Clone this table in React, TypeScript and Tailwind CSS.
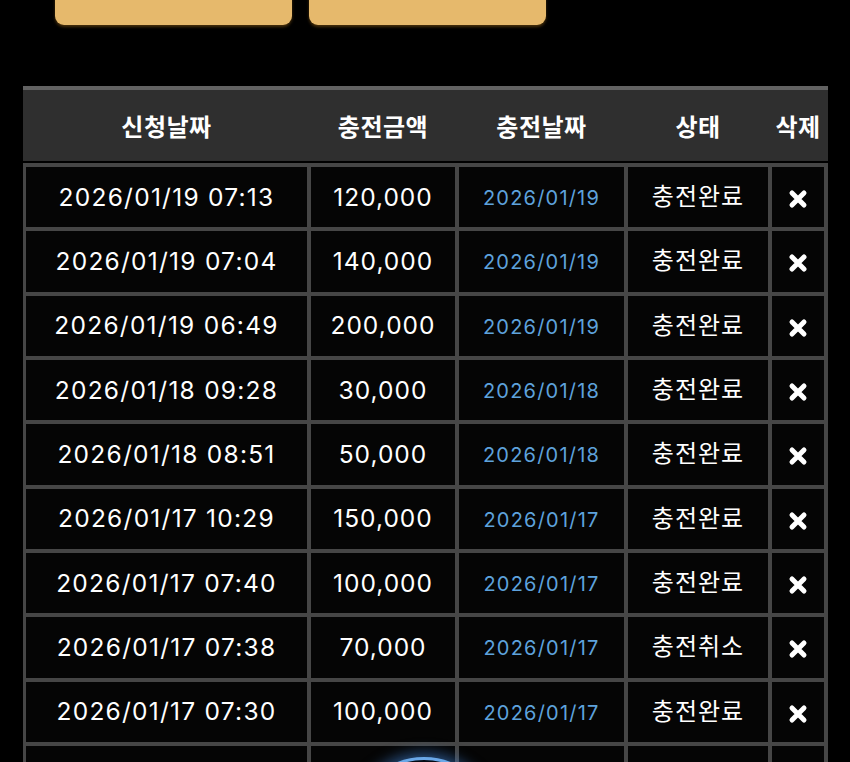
import React from 'react';

interface ChargeRow {
  requested: string;
  amount: string;
  chargedOn: string;
  status: string;
}

const rows: ChargeRow[] = [
  { requested: '2026/01/19 07:13', amount: '120,000', chargedOn: '2026/01/19', status: '충전완료' },
  { requested: '2026/01/19 07:04', amount: '140,000', chargedOn: '2026/01/19', status: '충전완료' },
  { requested: '2026/01/19 06:49', amount: '200,000', chargedOn: '2026/01/19', status: '충전완료' },
  { requested: '2026/01/18 09:28', amount: '30,000', chargedOn: '2026/01/18', status: '충전완료' },
  { requested: '2026/01/18 08:51', amount: '50,000', chargedOn: '2026/01/18', status: '충전완료' },
  { requested: '2026/01/17 10:29', amount: '150,000', chargedOn: '2026/01/17', status: '충전완료' },
  { requested: '2026/01/17 07:40', amount: '100,000', chargedOn: '2026/01/17', status: '충전완료' },
  { requested: '2026/01/17 07:38', amount: '70,000', chargedOn: '2026/01/17', status: '충전취소' },
  { requested: '2026/01/17 07:30', amount: '100,000', chargedOn: '2026/01/17', status: '충전완료' },
];

const cols = 'grid grid-cols-[281px_144px_165px_140px_52px] gap-x-[4px]';
const font = { fontFamily: '"Inter", "Noto Sans CJK KR", sans-serif' };

const DeleteIcon = () => (
  <svg width="20" height="20" viewBox="0 0 20 20" className="mt-[4px]">
    <path d="M4 4 L16 16 M16 4 L4 16" stroke="white" strokeWidth="5" strokeLinecap="round" />
  </svg>
);

const Cell = ({ children, className = '' }: { children?: React.ReactNode; className?: string }) => (
  <div className={`flex h-[60.33px] items-center justify-center bg-[#050505] ${className}`}>{children}</div>
);

export default function App() {
  return (
    <div className="relative h-[762px] overflow-hidden bg-black" style={font}>
      <div className="flex gap-[17px] pl-[55px]">
        <div className="mt-[-35px] h-[60px] w-[237px] rounded-[9px] bg-[#e6b96c] shadow-[0_2px_3px_rgba(120,80,20,0.6)]" />
        <div className="mt-[-35px] h-[60px] w-[237px] rounded-[9px] bg-[#e6b96c] shadow-[0_2px_3px_rgba(120,80,20,0.6)]" />
      </div>

      <div className="ml-[23px] mt-[61px] w-[805px]">
        <div className="border-t-[4px] border-[#626262] bg-[#2f2f2f] pl-[3px]">
          <div
            className={`${cols} h-[71px] items-center text-center text-[24px] font-bold tracking-[0.5px] text-white`}
            style={{ fontFamily: '"Noto Sans CJK KR", sans-serif' }}
          >
            <div>신청날짜</div>
            <div>충전금액</div>
            <div>충전날짜</div>
            <div>상태</div>
            <div>삭제</div>
          </div>
        </div>

        <div className={`${cols} mt-[2px] gap-y-[4px] bg-[#464646] pb-[4px] pl-[3px] pt-[4px]`}>
          {rows.map((r, i) => (
            <React.Fragment key={i}>
              <Cell className="text-[24.5px] tracking-[1.25px] text-white">{r.requested}</Cell>
              <Cell className="text-[24.5px] tracking-[1px] text-white">{r.amount}</Cell>
              <Cell className="pt-[2px] text-[20px] tracking-[1.2px] text-[#5ea2dc]">{r.chargedOn}</Cell>
              <Cell className="text-[24px] tracking-[1px] text-white">{r.status}</Cell>
              <Cell>
                <DeleteIcon />
              </Cell>
            </React.Fragment>
          ))}
          <Cell />
          <Cell />
          <Cell />
          <Cell />
          <Cell />
        </div>
      </div>

      <div className="absolute left-[354px] top-[757px] h-[140px] w-[140px] rounded-full border-[3px] border-[#6aa8e8] bg-[#050a14] shadow-[0_0_14px_4px_rgba(70,140,230,0.55)]" />
    </div>
  );
}
